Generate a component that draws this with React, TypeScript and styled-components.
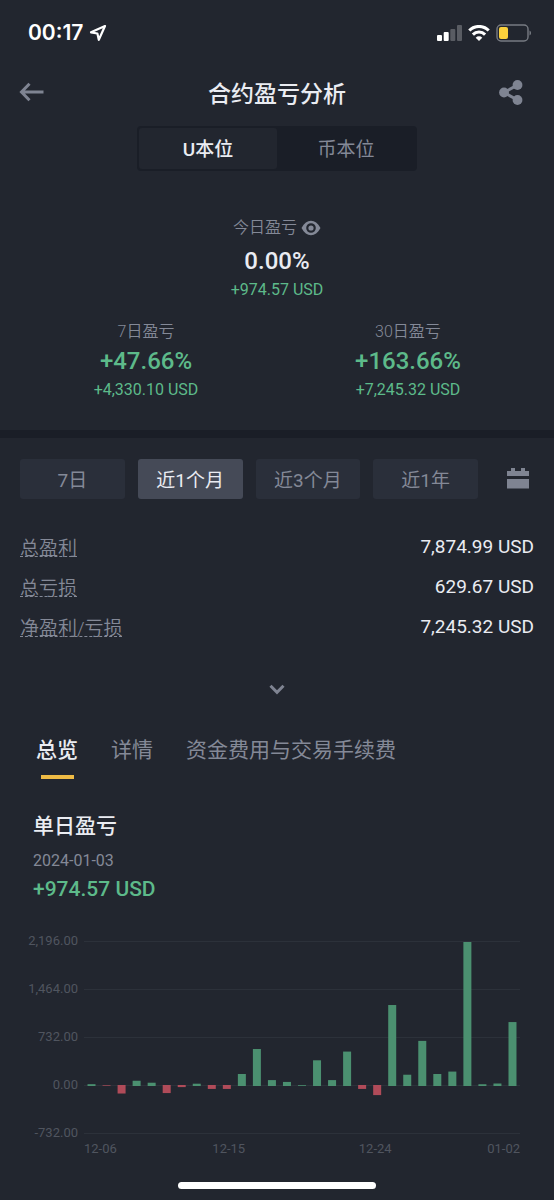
import React, { useState } from "react";
import styled, { createGlobalStyle } from "styled-components";

const color = {
  bg: "#22262f",
  sunken: "#1a1e27",
  text: "#eaecf2",
  muted: "#848997",
  icon: "#7f8492",
  axis: "#50555f",
  grid: "#2c313a",
  chip: "#2a2f3a",
  chipActive: "#454a57",
  green: "#5dba8a",
  bar: "#4b9070",
  red: "#b04b59",
  yellow: "#efbb45",
};

const GlobalStyle = createGlobalStyle`
  * { box-sizing: border-box; }
  body {
    margin: 0;
    background: ${color.bg};
    color: ${color.text};
    font-family: Roboto, "Noto Sans CJK SC", sans-serif;
  }
  button {
    padding: 0;
    border: 0;
    background: none;
    color: inherit;
    font: inherit;
    cursor: pointer;
  }
  h1, h2, p, dl, dd { margin: 0; font-weight: inherit; }
`;

const Page = styled.div`
  display: flex;
  flex-direction: column;
  min-height: 100vh;
`;

const StatusBar = styled.div`
  display: flex;
  align-items: center;
  justify-content: space-between;
  height: 66px;
  padding: 0 22px 0 28px;
  color: #fff;
`;

const StatusGroup = styled.div`
  display: flex;
  align-items: center;
  gap: 6px;
`;

const Clock = styled.span`
  font: 600 21px/24px Inter, sans-serif;
`;

const Header = styled.header`
  display: grid;
  grid-template-columns: 43px 1fr 43px;
  align-items: center;
  height: 52px;
  padding: 0 16px;
  margin-bottom: 8px;
`;

const Title = styled.h1`
  padding-top: 6px;
  font-size: 23px;
  line-height: 32px;
  font-weight: 500;
  text-align: center;
`;

const IconButton = styled.button`
  display: flex;
  align-items: center;
  justify-content: center;
  width: 32px;
  height: 32px;
  color: ${color.icon};
`;

const Segmented = styled.div`
  display: grid;
  grid-template-columns: 1fr 1fr;
  align-self: center;
  width: 280px;
  height: 45px;
  padding: 2px;
  border-radius: 4px;
  background: ${color.sunken};
`;

const Segment = styled.button<{ $active: boolean }>`
  padding-top: 3px;
  border-radius: 3px;
  font-size: 19px;
  line-height: 28px;
  font-weight: ${(p) => (p.$active ? 500 : 400)};
  color: ${(p) => (p.$active ? color.text : color.muted)};
  background: ${(p) => (p.$active ? color.bg : "transparent")};
`;

const StatLabel = styled.div`
  display: flex;
  align-items: center;
  gap: 4px;
  font-size: 16px;
  line-height: 24px;
  font-weight: 350;
  color: ${color.muted};
`;

const Summary = styled.section`
  display: grid;
  grid-template-columns: 1fr 1fr;
  row-gap: 18px;
  padding: 45px 15px 28px;
  border-bottom: 8px solid ${color.sunken};
`;

const Stat = styled.div<{ $wide?: boolean }>`
  display: flex;
  flex-direction: column;
  align-items: center;
  grid-column: ${(p) => (p.$wide ? "1 / -1" : "auto")};

  ${StatLabel} {
    margin-bottom: ${(p) => (p.$wide ? "4px" : "0")};
  }
`;

const StatValue = styled.p<{ $gain?: boolean }>`
  font-size: 24px;
  line-height: 34px;
  font-weight: 500;
  color: ${(p) => (p.$gain ? color.green : color.text)};
`;

const StatAmount = styled.p`
  font-size: 16px;
  line-height: 24px;
  color: ${color.green};
`;

const Filters = styled.div`
  display: flex;
  align-items: center;
  gap: 13px;
  padding: 21px 20px 28px;

  ${IconButton} {
    margin-left: 11px;
  }
`;

const Chip = styled.button<{ $active: boolean }>`
  flex: 1;
  height: 40px;
  padding-top: 3px;
  border-radius: 3px;
  font-size: 19px;
  line-height: 28px;
  color: ${(p) => (p.$active ? color.text : color.muted)};
  background: ${(p) => (p.$active ? color.chipActive : color.chip)};
`;

const Totals = styled.dl`
  padding: 0 20px;
`;

const TotalRow = styled.div`
  display: flex;
  align-items: center;
  justify-content: space-between;
  height: 40px;
  font-size: 19px;
  line-height: 28px;
`;

const TotalLabel = styled.dt`
  padding-top: 3px;
  font-weight: 350;
  color: ${color.muted};
  text-decoration: underline dashed 1px;
  text-underline-offset: 1px;
  text-decoration-skip-ink: none;
`;

const ExpandButton = styled(IconButton)`
  align-self: center;
  margin: 26px 0 29px;
`;

const Tabs = styled.nav`
  display: flex;
  gap: 33px;
  padding: 0 36px;
`;

const Tab = styled.button<{ $active: boolean }>`
  display: flex;
  flex-direction: column;
  align-items: center;
  gap: 9px;
  font-size: 21px;
  line-height: 32px;
  font-weight: ${(p) => (p.$active ? 500 : 400)};
  color: ${(p) => (p.$active ? color.text : color.muted)};

  &::after {
    content: "";
    width: 33px;
    height: 4px;
    background: ${(p) => (p.$active ? color.yellow : "transparent")};
  }
`;

const Daily = styled.section`
  padding: 31px 33px 0;
`;

const DailyTitle = styled.h2`
  font-size: 21px;
  line-height: 32px;
  font-weight: 500;
`;

const DailyDate = styled.p`
  margin-top: 7px;
  font-size: 16px;
  line-height: 24px;
  color: ${color.muted};
`;

const DailyAmount = styled.p`
  font-size: 21px;
  line-height: 32px;
  font-weight: 500;
  color: ${color.green};
`;

const Chart = styled.figure`
  display: grid;
  grid-template-columns: 58px 1fr;
  column-gap: 6px;
  margin: 28px 34px 0 20px;
  font-size: 13px;
  line-height: 16px;
  color: ${color.axis};
`;

const YAxis = styled.div`
  display: flex;
  flex-direction: column;
  justify-content: space-between;
  height: 208px;
  text-align: right;
`;

const Plot = styled.svg`
  display: block;
  width: 100%;
  height: 208px;
`;

const XAxis = styled.div`
  display: grid;
  grid-column: 2;
  grid-template-columns: 128fr 146fr 128fr auto;
`;

const HomeIndicator = styled.div`
  width: 198px;
  height: 7px;
  margin: 25px auto 11px;
  border-radius: 4px;
  background: #fff;
`;

const periods = ["7日", "近1个月", "近3个月", "近1年"];
const tabs = ["总览", "详情", "资金费用与交易手续费"];
const totals = [
  ["总盈利", "7,874.99 USD"],
  ["总亏损", "629.67 USD"],
  ["净盈利/亏损", "7,245.32 USD"],
];

const yTicks = ["2,196.00", "1,464.00", "732.00", "0.00", "-732.00"];
const xTicks = ["12-06", "12-15", "12-24", "01-02"];
const dailyPnl = [
  28, -10, -130, 80, 50, -123, -32, 35, -60, -60, 183, 564, 90, 62, 12, 392,
  90, 525, -60, -154, 1235, 172, 688, 183, 220, 2196, 27, 38, 975,
];

const STEP = 48;
const TOP = 8;
const ZERO = TOP + STEP * 3;
const PLOT_WIDTH = 436;
const SLOT = PLOT_WIDTH / dailyPnl.length;

function PnlPlot() {
  return (
    <Plot
      viewBox={`0 0 ${PLOT_WIDTH} 208`}
      preserveAspectRatio="none"
      role="img"
      aria-label="单日盈亏"
    >
      {yTicks.map((tick, i) => (
        <rect key={tick} x="0" y={TOP + STEP * i} width={PLOT_WIDTH} height="1" fill={color.grid} />
      ))}
      {dailyPnl.map((value, i) => {
        const height = (Math.abs(value) / 732) * STEP;
        return (
          <rect
            key={i}
            x={SLOT * (i + 0.5) - 4}
            y={value > 0 ? ZERO + 1 - height : ZERO}
            width="8"
            height={height}
            fill={value > 0 ? color.bar : color.red}
          />
        );
      })}
    </Plot>
  );
}

function LocationIcon() {
  return (
    <svg width="18" height="18" viewBox="0 0 18 18" fill="none" stroke="currentColor" strokeWidth="2.2" strokeLinejoin="round">
      <path d="M16 2 2 8.300 8.400 9.500 9.800 15.800Z" />
    </svg>
  );
}

function SignalIcon() {
  return (
    <svg width="25" height="16" viewBox="0 0 25 16" fill="currentColor">
      <rect x="0" y="10" width="5" height="6" rx="1" />
      <rect x="6.700" y="7" width="5" height="9" rx="1" />
      <rect x="13.300" y="4" width="5" height="12" rx="1" opacity=".25" />
      <rect x="20" y="0" width="5" height="16" rx="1" opacity=".25" />
    </svg>
  );
}

function WifiIcon() {
  return (
    <svg width="22" height="16" viewBox="0 0 22 16" fill="none" stroke="currentColor" strokeWidth="3.100">
      <path d="M1.300 5.500a13.700 13.700 0 0 1 19.400 0" />
      <path d="M4.900 9.600a8.600 8.600 0 0 1 12.200 0" />
      <path d="M11 16 7.700 12.700a4.700 4.700 0 0 1 6.600 0Z" fill="currentColor" stroke="none" />
    </svg>
  );
}

function BatteryIcon() {
  return (
    <svg width="36" height="18" viewBox="0 0 36 18" fill="none">
      <rect x="1" y="1" width="31" height="16" rx="4" stroke="#777b83" strokeWidth="1.400" />
      <rect x="3" y="3" width="9" height="12" rx="2" fill="#fbd13c" />
      <path d="M33.500 6.500c2 .8 2 4.200 0 5Z" fill="#777b83" />
    </svg>
  );
}

function BackIcon() {
  return (
    <svg width="26" height="20" viewBox="0 0 26 20" fill="none" stroke="currentColor" strokeWidth="3">
      <path d="M10.500 1.800 2.500 10l8 8.200M2.500 10h22" />
    </svg>
  );
}

function ShareIcon() {
  return (
    <svg width="24" height="26" viewBox="0 0 24 26" fill="currentColor">
      <path d="M18.500 6 5 13.500l13.500 7.500" fill="none" stroke="currentColor" strokeWidth="3" />
      <circle cx="5" cy="13.500" r="4.900" />
      <circle cx="18.500" cy="6" r="4.900" />
      <circle cx="18.500" cy="21" r="4.900" />
    </svg>
  );
}

function EyeIcon() {
  return (
    <svg width="20" height="16" viewBox="0 0 20 16" fill="currentColor">
      <path
        fillRule="evenodd"
        d="M.5 8C3.200 3.200 6.300.8 10 .8S16.800 3.200 19.500 8C16.800 12.800 13.700 15.200 10 15.200S3.200 12.800.5 8ZM10 3.200a4.800 4.800 0 1 0 0 9.600 4.800 4.800 0 0 0 0-9.600Z"
      />
      <circle cx="10" cy="8" r="2.600" />
    </svg>
  );
}

function CalendarIcon() {
  return (
    <svg width="22" height="22" viewBox="0 0 22 22" fill="currentColor">
      <path d="M0 3h4V0h4v3h6V0h4v3h4v5H0ZM0 11h22v9.500H0Z" />
    </svg>
  );
}

function ChevronIcon() {
  return (
    <svg width="16" height="11" viewBox="0 0 16 11" fill="none" stroke="currentColor" strokeWidth="3">
      <path d="M1.500 1.800 8 8.300l6.500-6.500" />
    </svg>
  );
}

export default function App() {
  const [margin, setMargin] = useState("U本位");
  const [period, setPeriod] = useState("近1个月");
  const [tab, setTab] = useState("总览");

  return (
    <Page>
      <GlobalStyle />
      <StatusBar>
        <StatusGroup>
          <Clock>00:17</Clock>
          <LocationIcon />
        </StatusGroup>
        <StatusGroup>
          <SignalIcon />
          <WifiIcon />
          <BatteryIcon />
        </StatusGroup>
      </StatusBar>

      <Header>
        <IconButton aria-label="返回"><BackIcon /></IconButton>
        <Title>合约盈亏分析</Title>
        <IconButton aria-label="分享"><ShareIcon /></IconButton>
      </Header>

      <Segmented>
        {["U本位", "币本位"].map((name) => (
          <Segment key={name} $active={name === margin} aria-pressed={name === margin} onClick={() => setMargin(name)}>
            {name}
          </Segment>
        ))}
      </Segmented>

      <Summary>
        <Stat $wide>
          <StatLabel>今日盈亏<EyeIcon /></StatLabel>
          <StatValue>0.00%</StatValue>
          <StatAmount>+974.57 USD</StatAmount>
        </Stat>
        <Stat>
          <StatLabel>7日盈亏</StatLabel>
          <StatValue $gain>+47.66%</StatValue>
          <StatAmount>+4,330.10 USD</StatAmount>
        </Stat>
        <Stat>
          <StatLabel>30日盈亏</StatLabel>
          <StatValue $gain>+163.66%</StatValue>
          <StatAmount>+7,245.32 USD</StatAmount>
        </Stat>
      </Summary>

      <Filters>
        {periods.map((name) => (
          <Chip key={name} $active={name === period} aria-pressed={name === period} onClick={() => setPeriod(name)}>
            {name}
          </Chip>
        ))}
        <IconButton aria-label="选择日期"><CalendarIcon /></IconButton>
      </Filters>

      <Totals>
        {totals.map(([label, amount]) => (
          <TotalRow key={label}>
            <TotalLabel>{label}</TotalLabel>
            <dd>{amount}</dd>
          </TotalRow>
        ))}
      </Totals>
      <ExpandButton aria-label="展开"><ChevronIcon /></ExpandButton>

      <Tabs>
        {tabs.map((name) => (
          <Tab key={name} $active={name === tab} aria-pressed={name === tab} onClick={() => setTab(name)}>
            {name}
          </Tab>
        ))}
      </Tabs>

      <Daily>
        <DailyTitle>单日盈亏</DailyTitle>
        <DailyDate>2024-01-03</DailyDate>
        <DailyAmount>+974.57 USD</DailyAmount>
      </Daily>

      <Chart>
        <YAxis>
          {yTicks.map((tick) => <span key={tick}>{tick}</span>)}
        </YAxis>
        <PnlPlot />
        <XAxis>
          {xTicks.map((tick) => <span key={tick}>{tick}</span>)}
        </XAxis>
      </Chart>

      <HomeIndicator />
    </Page>
  );
}
